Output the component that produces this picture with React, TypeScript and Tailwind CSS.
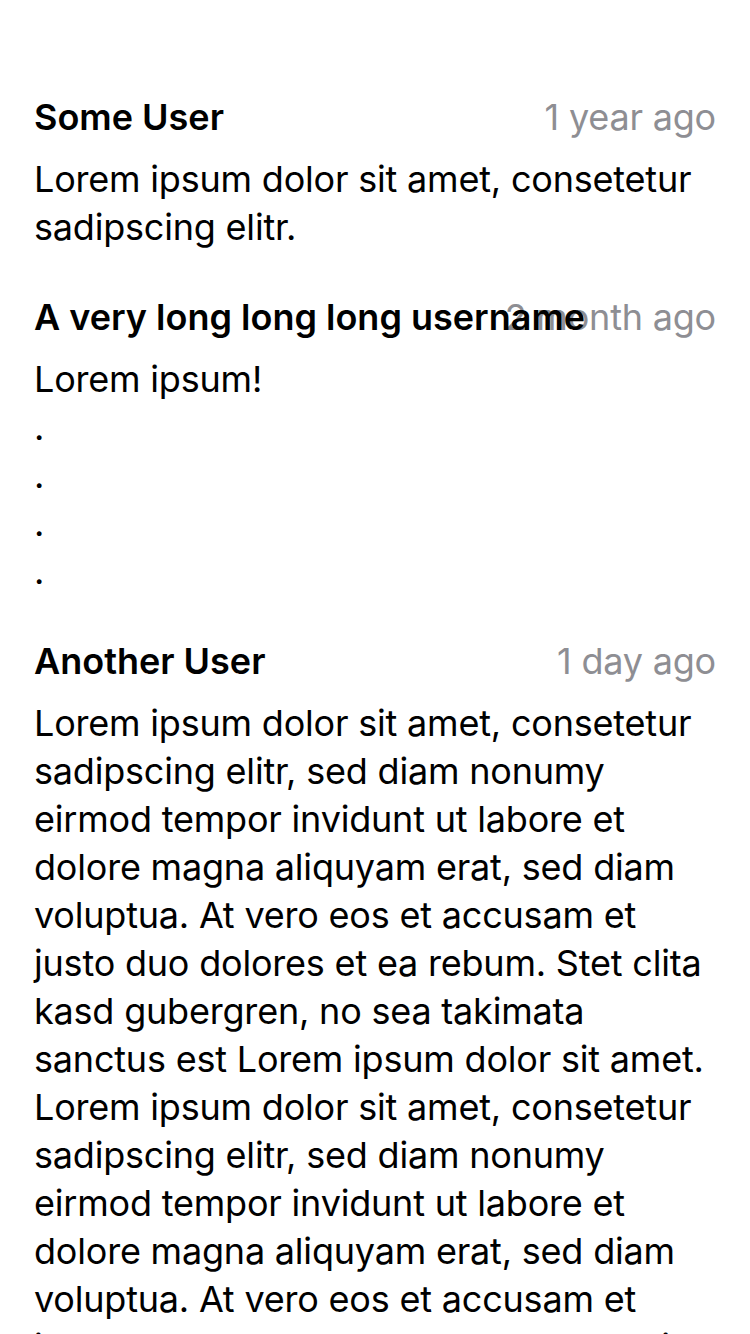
import React from "react";

const long =
  "Lorem ipsum dolor sit amet, consetetur sadipscing elitr, sed diam nonumy eirmod tempor invidunt ut labore et dolore magna aliquyam erat, sed diam voluptua. At vero eos et accusam et justo duo dolores et ea rebum. Stet clita kasd gubergren, no sea takimata sanctus est Lorem ipsum dolor sit amet. Lorem ipsum dolor sit amet, consetetur sadipscing elitr, sed diam nonumy eirmod tempor invidunt ut labore et dolore magna aliquyam erat, sed diam voluptua. At vero eos et accusam et justo duo dolores et ea rebum. Stet clita kasd gubergren, no sea takimata sanctus est Lorem ipsum dolor sit amet.";

type C = { name: string; date: string; body: React.ReactNode };

const comments: C[] = [
  { name: "Some User", date: "1 year ago", body: "Lorem ipsum dolor sit amet, consetetur sadipscing elitr." },
  {
    name: "A very long long long username",
    date: "2 month ago",
    body: (
      <>
        Lorem ipsum!
        <br />.
        <br />.
        <br />.
        <br />.
      </>
    ),
  },
  { name: "Another User", date: "1 day ago", body: long },
];

export default function App() {
  return (
    <div
      className="w-[750px] h-[1334px] overflow-hidden bg-white text-black pl-[34px] pr-[34px] pt-[93px] flex flex-col gap-[42px]"
      style={{ fontFamily: "Inter, 'Noto Sans', sans-serif" }}
    >
      {comments.map((c, i) => (
        <div key={i} className="flex flex-col gap-[14px]">
          <div className="grid text-[36px] leading-[48px]">
            <span className="col-start-1 row-start-1 justify-self-end text-[#8e8e93] tracking-[-0.2px]">{c.date}</span>
            <span className="col-start-1 row-start-1 justify-self-start font-semibold whitespace-nowrap tracking-[0px]">{c.name}</span>
          </div>
          <p className="text-[36px] leading-[48px] tracking-[-0.2px]">{c.body}</p>
        </div>
      ))}
    </div>
  );
}
